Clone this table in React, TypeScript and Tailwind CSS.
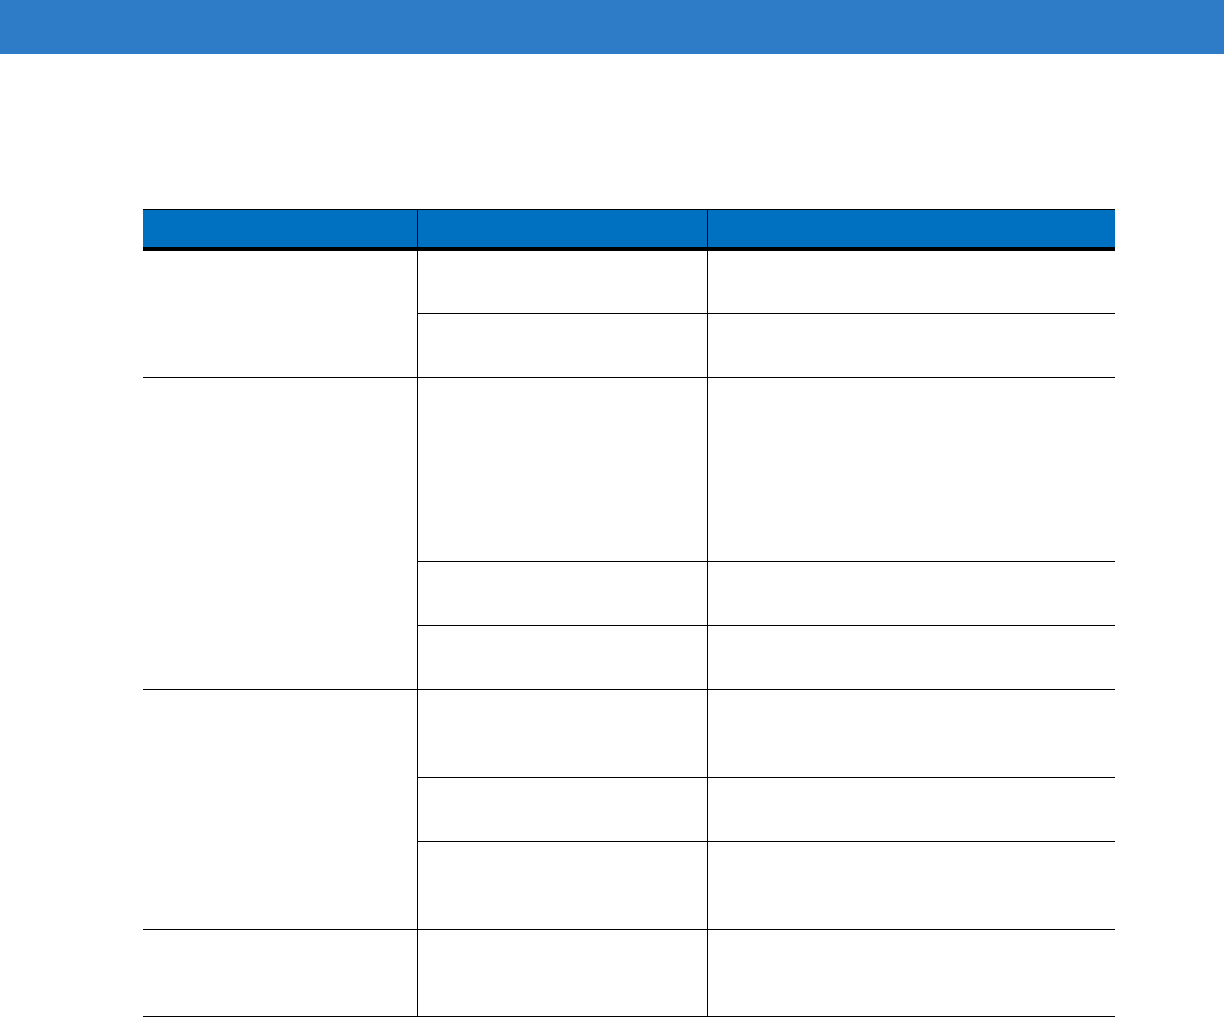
// each group: heights of its sub-rows (bottom border included, except on the last one)
const groups: string[][] = [
  ["h-[63px]", "h-[63px]"],
  ["h-[184px]", "h-[64px]", "h-[63px]"],
  ["h-[88px]", "h-[64px]", "h-[87px]"],
  ["h-[86px]"],
];

function Group({ rows }: { rows: string[] }) {
  return (
    <div className="flex border-b border-black">
      <div className="w-[274px] shrink-0" />
      <div className="flex flex-1 flex-col border-l border-black">
        {rows.map((h, i) => (
          <div key={i} className={`flex ${h} ${i < rows.length - 1 ? "border-b border-black" : ""}`}>
            <div className="w-[289px] shrink-0" />
            <div className="flex-1 border-l border-black" />
          </div>
        ))}
      </div>
    </div>
  );
}

export default function App() {
  return (
    <div className="min-h-[1018px] w-[1224px] bg-white font-['Liberation_Sans',sans-serif]">
      <div className="h-[54px] bg-[#2e7bc8]" />
      <div className="ml-[143px] mt-[155px] w-[972px]">
        <div className="flex h-[42px] border-t border-b-4 border-black bg-[#0071c1]">
          <div className="w-[274px] shrink-0" />
          <div className="w-[290px] shrink-0 border-l border-black" />
          <div className="flex-1 border-l border-black" />
        </div>
        {groups.map((rows, i) => (
          <Group key={i} rows={rows} />
        ))}
      </div>
    </div>
  );
}
